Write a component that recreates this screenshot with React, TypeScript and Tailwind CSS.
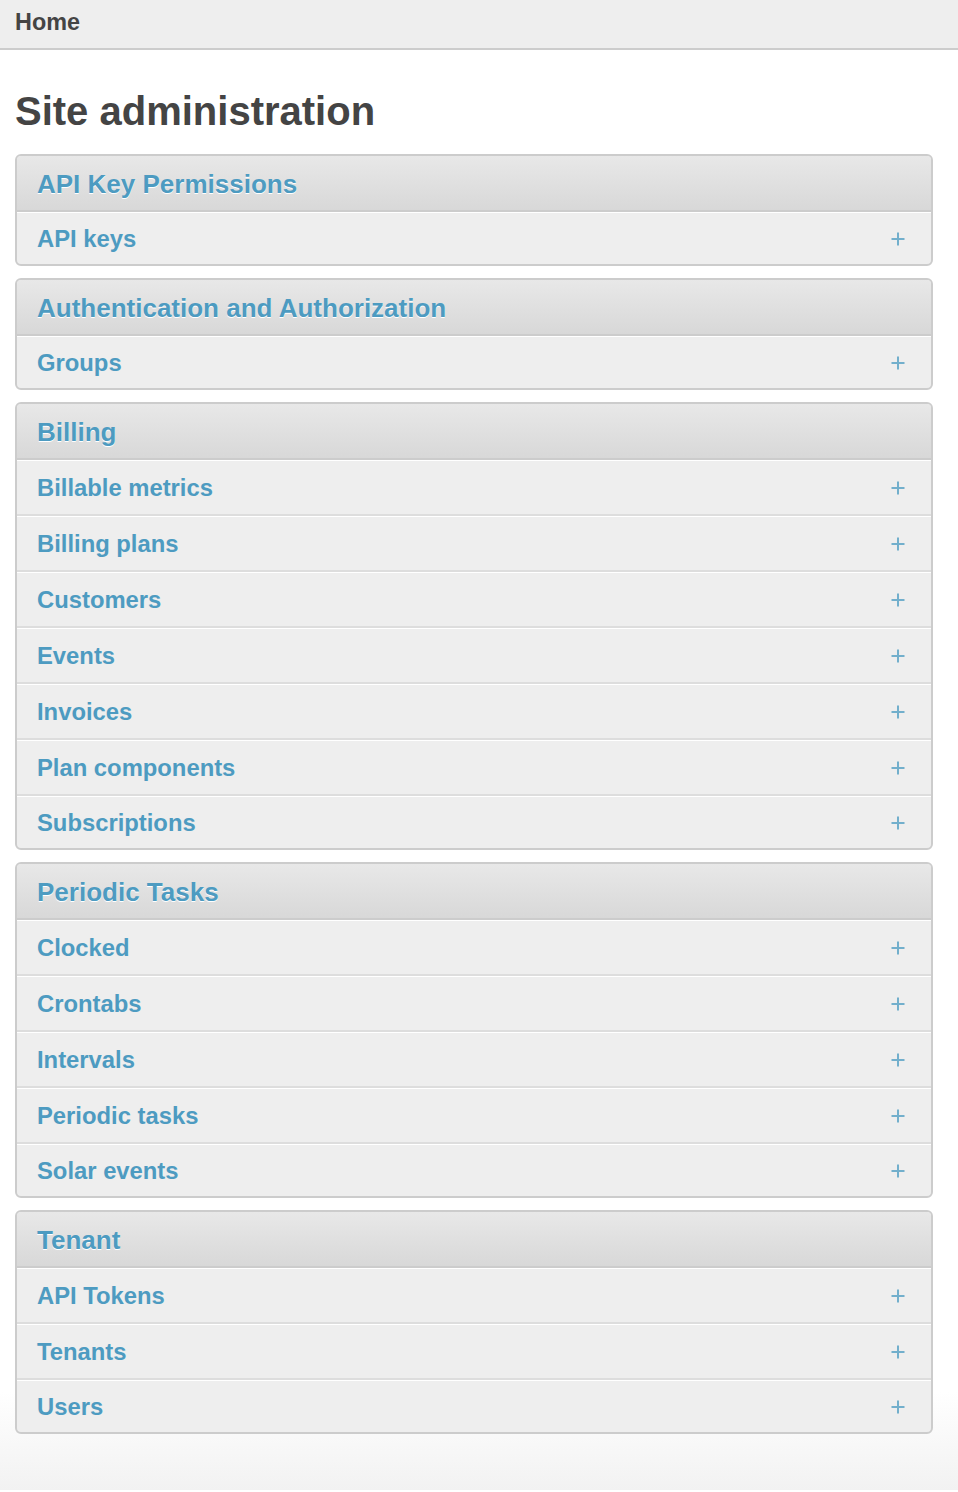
import React from "react";

type Module = { title: string; models: string[] };

const modules: Module[] = [
  { title: "API Key Permissions", models: ["API keys"] },
  { title: "Authentication and Authorization", models: ["Groups"] },
  {
    title: "Billing",
    models: [
      "Billable metrics",
      "Billing plans",
      "Customers",
      "Events",
      "Invoices",
      "Plan components",
      "Subscriptions",
    ],
  },
  {
    title: "Periodic Tasks",
    models: ["Clocked", "Crontabs", "Intervals", "Periodic tasks", "Solar events"],
  },
  { title: "Tenant", models: ["API Tokens", "Tenants", "Users"] },
];

const PlusIcon = () => (
  <svg width="16" height="16" viewBox="0 0 16 16" className="text-[#72afcc]">
    <path d="M8 1.5v13M1.5 8h13" stroke="currentColor" strokeWidth="2" />
  </svg>
);

export default function App() {
  return (
    <div
      className="min-h-[1492px] bg-white"
      style={{ fontFamily: '"Liberation Sans", Arial, sans-serif' }}
    >
      {/* breadcrumb bar */}
      <div className="h-[50px] bg-[#eeeeee] border-b-2 border-[#cccccc] px-[15px] flex items-start pt-[8px]">
        <a className="text-[23.4px] leading-[28px] font-bold text-[#444444]">Home</a>
      </div>

      <div className="pl-[15px] pr-[25px] pb-[56px] bg-gradient-to-b from-white from-[93%] to-[#f2f2f2]">
        <h1 className="text-[40px] leading-[44px] font-bold text-[#444444] mt-[39px] mb-[21px]">
          Site administration
        </h1>

        <div className="flex flex-col gap-[12px]">
          {modules.map((m) => (
            <div
              key={m.title}
              className="border-2 border-[#cccccc] rounded-[6px] overflow-hidden bg-[#eeeeee]"
            >
              <div className="h-[56px] bg-gradient-to-b from-[#e8e8e8] to-[#d8d8d8] border-b-2 border-[#cccccc] flex items-center pl-[20px] pt-[2px]">
                <span
                  className="text-[26px] font-bold text-[#4d9bc1]"
                  style={{ textShadow: "0 1px 0 #fff" }}
                >
                  {m.title}
                </span>
              </div>
              {m.models.map((name, i) => {
                const last = i === m.models.length - 1;
                return (
                  <div
                    key={name}
                    className={
                      "flex items-center justify-between pl-[20px] pr-[25px] border-t border-white " +
                      (last ? "h-[52px]" : "h-[56px] border-b-2 border-b-[#dddddd]")
                    }
                  >
                    <a className="text-[23.8px] font-bold text-[#4d9bc1]">{name}</a>
                    <PlusIcon />
                  </div>
                );
              })}
            </div>
          ))}
        </div>
      </div>
    </div>
  );
}
